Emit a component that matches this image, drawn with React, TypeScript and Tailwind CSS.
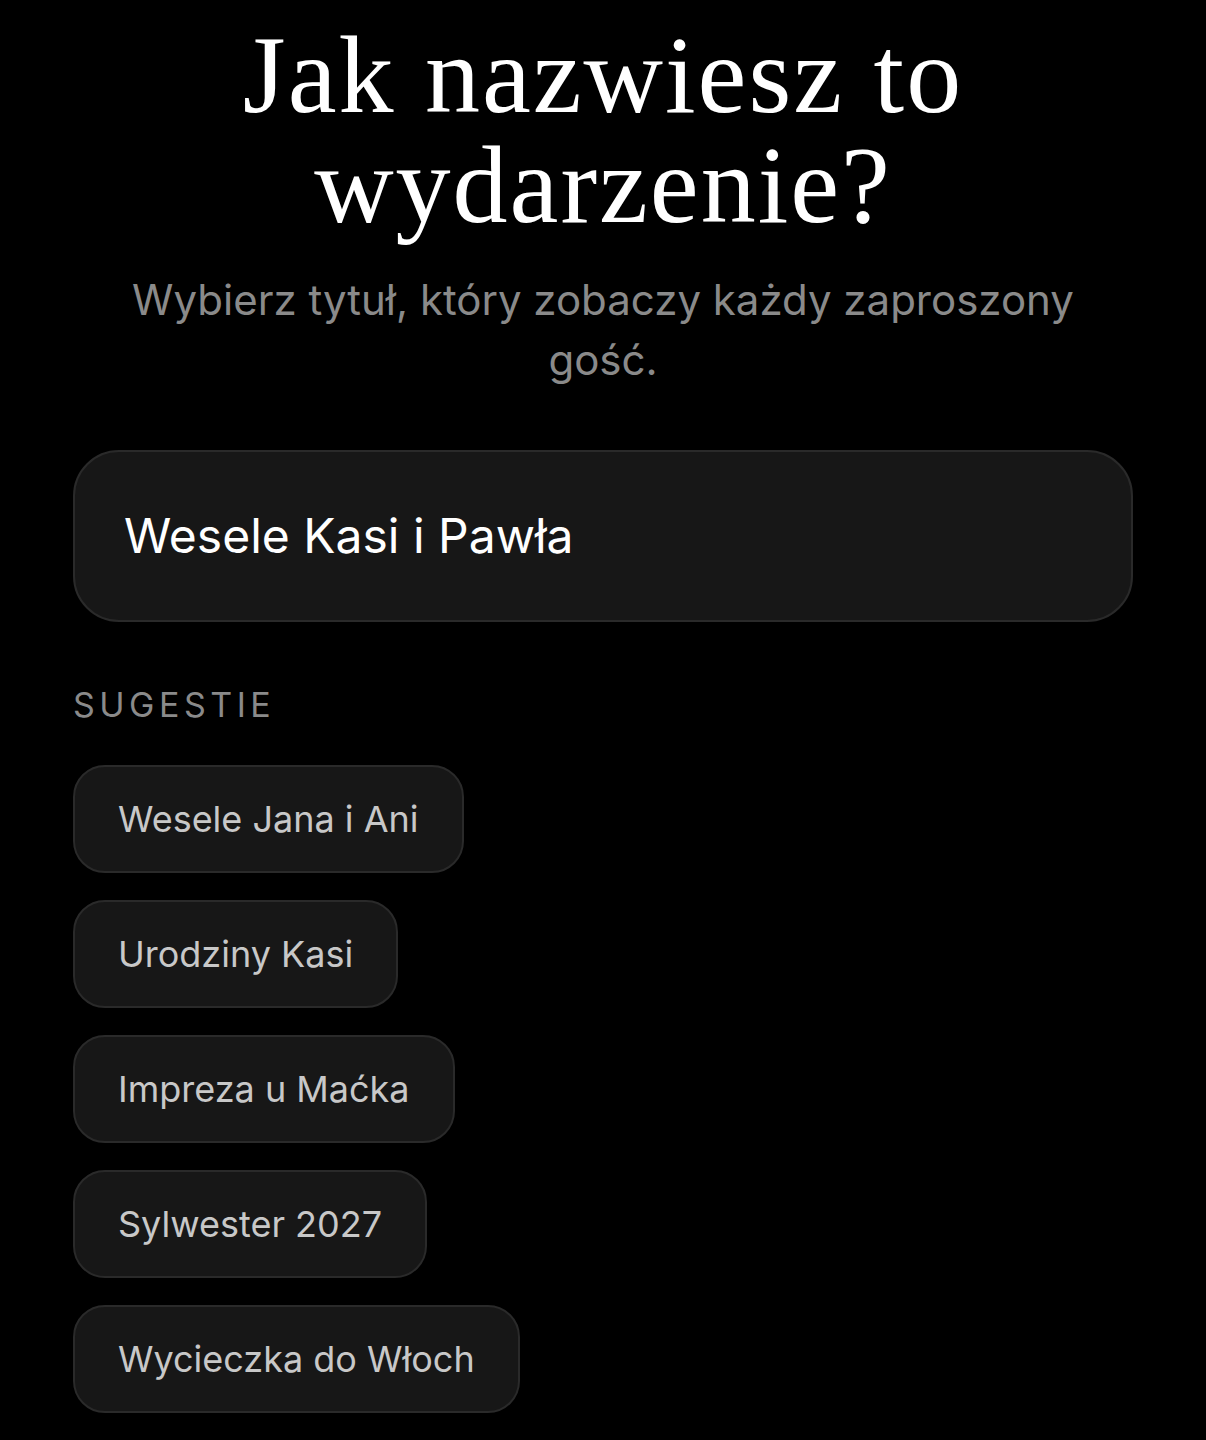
import React, { useState } from 'react';

const suggestions = [
  'Wesele Jana i Ani',
  'Urodziny Kasi',
  'Impreza u Maćka',
  'Sylwester 2027',
  'Wycieczka do Włoch',
];

export default function App() {
  const [title, setTitle] = useState('Wesele Kasi i Pawła');

  return (
    <div className="min-h-[1440px] w-full bg-black text-white font-['Inter','Liberation_Sans',sans-serif]">
      <div className="px-[73px] pt-[20px]">
        <h1 className="text-center font-['Liberation_Serif','DejaVu_Serif',serif] text-[110px] leading-[110px] tracking-[2px]">
          <span className="block">Jak nazwiesz to</span>
          <span className="block">wydarzenie?</span>
        </h1>
        <p className="mx-auto mt-[30px] max-w-[1000px] text-center text-[42px] leading-[60px] text-[#8a8a8a]">
          Wybierz tytuł, który zobaczy każdy zaproszony gość.
        </p>

        <div className="mt-[60px] flex h-[172px] items-center rounded-[46px] border-2 border-[#2a2a2a] bg-[#171717] px-[49px]">
          <input
            value={title}
            onChange={(e) => setTitle(e.target.value)}
            className="w-full bg-transparent text-[48px] text-white outline-none"
          />
        </div>

        <div className="mt-[63px] text-[34px] leading-[40px] tracking-[4.5px] text-[#8a8a8a]">SUGESTIE</div>

        <div className="mt-[40px] flex flex-col items-start gap-[27px]">
          {suggestions.map((s) => (
            <button
              key={s}
              onClick={() => setTitle(s)}
              className="flex h-[108px] items-center rounded-[32px] border-2 border-[#2a2a2a] bg-[#171717] px-[43px] text-[36px] text-[#c8c8c8]"
            >
              {s}
            </button>
          ))}
        </div>
      </div>
    </div>
  );
}
